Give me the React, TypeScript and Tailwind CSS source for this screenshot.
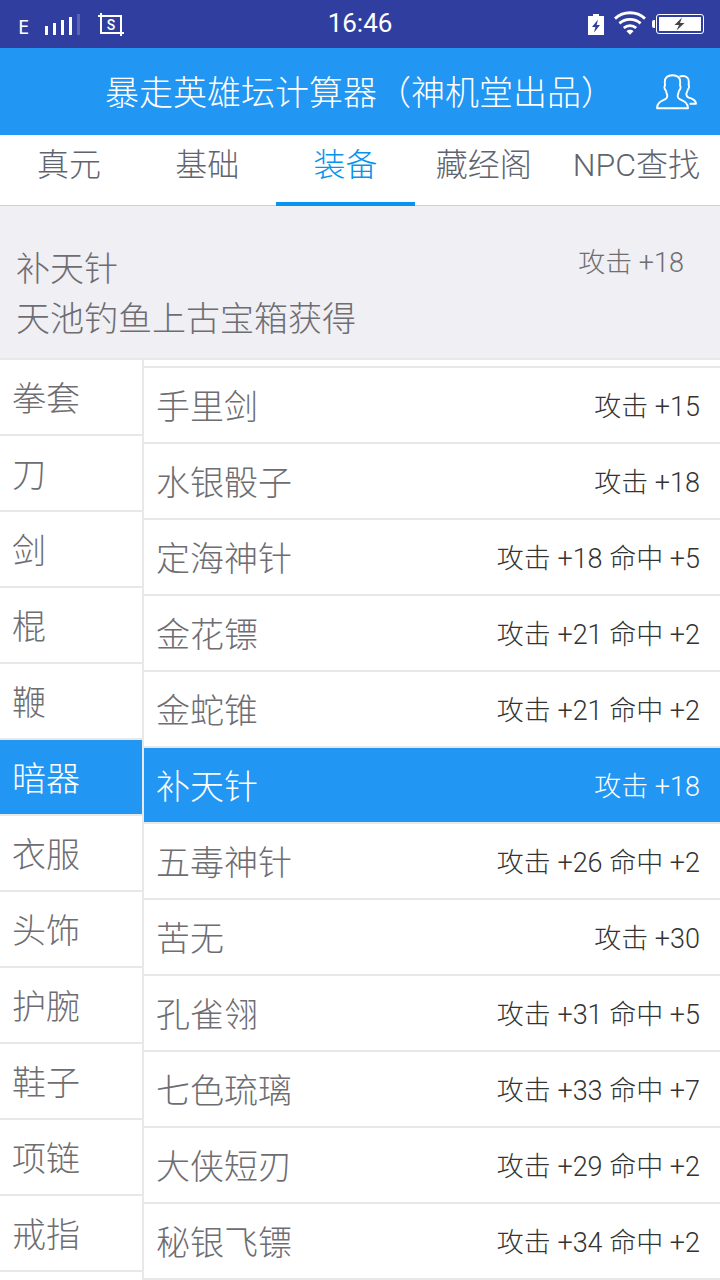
import { useState } from "react";

const tabs = ["真元", "基础", "装备", "藏经阁", "NPC查找"];

const categories = [
  "拳套", "刀", "剑", "棍", "鞭", "暗器",
  "衣服", "头饰", "护腕", "鞋子", "项链", "戒指",
];

const items = [
  { name: "手里剑", stats: "攻击 +15" },
  { name: "水银骰子", stats: "攻击 +18" },
  { name: "定海神针", stats: "攻击 +18 命中 +5" },
  { name: "金花镖", stats: "攻击 +21 命中 +2" },
  { name: "金蛇锥", stats: "攻击 +21 命中 +2" },
  { name: "补天针", stats: "攻击 +18" },
  { name: "五毒神针", stats: "攻击 +26 命中 +2" },
  { name: "苦无", stats: "攻击 +30" },
  { name: "孔雀翎", stats: "攻击 +31 命中 +5" },
  { name: "七色琉璃", stats: "攻击 +33 命中 +7" },
  { name: "大侠短刃", stats: "攻击 +29 命中 +2" },
  { name: "秘银飞镖", stats: "攻击 +34 命中 +2" },
];

function SignalIcon() {
  return (
    <svg width="36" height="24" viewBox="0 0 36 24" fill="#fff" aria-hidden="true">
      <rect x="1" y="14" width="3" height="9" />
      <rect x="9" y="11" width="3" height="12" />
      <rect x="17" y="8" width="3" height="15" />
      <rect x="25" y="5" width="3" height="18" />
      <rect x="33" y="2" width="3" height="21" opacity="0.2" />
    </svg>
  );
}

function CropFrame() {
  return (
    <svg className="absolute inset-0" width="26" height="24" viewBox="0 0 26 24" fill="#fff" aria-hidden="true">
      <path d="M2 1h2v21H2zM0 3h24v2H0zM22 3h2v21h-2zM2 20h24v2H2z" />
    </svg>
  );
}

function SmallBatteryIcon() {
  return (
    <svg width="16" height="21" viewBox="0 0 16 21" aria-hidden="true">
      <path d="M0 2h5V0h6v2h5v19H0z" fill="#fff" />
      <path d="M10 5.500 4 13h3.400L6 18.500 12 11H8.600z" fill="#303f9f" />
    </svg>
  );
}

function WifiIcon() {
  return (
    <svg width="32" height="24" viewBox="0 0 32 24" fill="none" stroke="#fff" strokeWidth="2.8" aria-hidden="true">
      <path d="M1 7.600C9.500-.2 22.500-.2 31 7.600" />
      <path d="M5.400 12.400c6-5.500 15.200-5.500 21.200 0" />
      <path d="M9.800 17c3.600-3.200 8.800-3.200 12.400 0" />
      <path d="M12.500 20.200c2-1.900 5-1.900 7 0L16 23.800z" fill="#fff" stroke="none" />
    </svg>
  );
}

function BatteryIcon() {
  return (
    <svg width="52" height="20" viewBox="0 0 52 20" aria-hidden="true">
      <path d="M3 6v8H2a2 2 0 0 1-2-2V8a2 2 0 0 1 2-2z" fill="#fff" />
      <rect x="4.500" y="0.500" width="47" height="19" rx="2.500" fill="none" stroke="#fff" />
      <rect x="7" y="3" width="42" height="14" fill="#fff" />
      <path d="M30 3.500 22.500 11h4.500l-2.500 5.500L32.500 9H28z" fill="#444" />
    </svg>
  );
}

function FriendsIcon() {
  return (
    <svg width="42" height="36" viewBox="0 0 42 36" fill="none" stroke="#fff" strokeWidth="1.900" strokeLinejoin="round" aria-hidden="true">
      <path d="M16.500 1.200c-5 0-7.900 2.600-7.700 7 0 1.600.2 2.600.2 3.300-1 .7-.7 4 1 5.200.3 2.600 1.300 3.400 1.300 5.200 0 1.600-.6 2.600-1.900 3.200C5.500 27 1 28.500 1 34.200h31c0-5.700-4.500-7.200-8.400-9.100-1.300-.6-1.900-1.600-1.900-3.200 0-1.800 1-2.600 1.300-5.200 1.700-1.200 2-4.500 1-5.200 0-.7.200-1.700.2-3.300.2-4.400-2.700-7-7.700-7z" />
      <path d="M23.500 2.700c1-.5 2-.7 3.300-.7 3.900 0 6.200 2.200 6 6 0 1.500-.1 2.300-.2 3 .9.800.6 3.500-.8 4.600-.3 2.200-1.500 3-1.500 4.700 0 1.600.7 2.400 2 3 4 1.800 7.700 2.300 7.700 6.500h-6.500" />
    </svg>
  );
}

export default function App() {
  const [tab, setTab] = useState("装备");
  const [category, setCategory] = useState("暗器");
  const [selected, setSelected] = useState("补天针");
  const current = items.find((item) => item.name === selected) ?? items[0];

  return (
    <div className="flex h-screen flex-col overflow-hidden bg-white font-['Roboto','Noto_Sans_CJK_SC',sans-serif] font-light text-[#6d6d72]">
      <div className="grid h-12 shrink-0 grid-cols-3 items-center bg-[#303f9f] text-white">
        <div className="flex items-center pl-[18px]">
          <span className="w-[26px] pt-1.5 font-['Noto_Sans'] text-xl font-normal leading-6">E</span>
          <SignalIcon />
          <span className="relative ml-[18px] flex h-6 w-[26px] items-center justify-center pt-px font-['Roboto'] text-sm font-medium">
            <CropFrame />
            S
          </span>
        </div>
        <time className="pb-0.5 text-center font-['Roboto'] text-[26px] font-normal leading-8">16:46</time>
        <div className="flex items-center justify-end pr-4">
          <SmallBatteryIcon />
          <span className="ml-2.5 mr-1.5 pb-0.5"><WifiIcon /></span>
          <BatteryIcon />
        </div>
      </div>

      <header className="grid h-[87px] shrink-0 grid-cols-[80px_1fr_80px] items-center bg-[#2196f3] text-white">
        <h1 className="col-start-2 whitespace-nowrap pt-0.5 text-center text-[34px] leading-[50px]">
          暴走英雄坛计算器（神机堂出品）
        </h1>
        <button type="button" aria-label="好友" className="flex justify-end pr-[22px]">
          <FriendsIcon />
        </button>
      </header>

      <nav className="flex h-[71px] shrink-0 border-b border-[#d0d0d0] text-[32px] leading-[60px]">
        {tabs.map((label) => (
          <button
            key={label}
            type="button"
            onClick={() => setTab(label)}
            className={
              label === tab
                ? "-mb-px flex flex-1 justify-center border-b-4 border-[#0894ec] px-5 text-[#0894ec]"
                : "flex flex-1 justify-center whitespace-nowrap px-5 text-[#5f646e]"
            }
          >
            {label}
          </button>
        ))}
      </nav>

      <section className="flex shrink-0 items-start justify-between border-b-2 border-[#e8e8e8] bg-[#efeff4] pb-3.5 pl-4 pr-9 pt-9">
        <div className="pt-0.5 text-[34px] leading-[50px]">
          <h2>{current.name}</h2>
          <p>天池钓鱼上古宝箱获得</p>
        </div>
        <p className="text-[27px] leading-[42px]">{current.stats}</p>
      </section>

      <main className="flex min-h-0 flex-1">
        <ul className="w-36 shrink-0 overflow-hidden border-r-2 border-[#e8e8e8]">
          {categories.map((label) => (
            <li key={label} className="h-[76px] border-b-2 border-[#e8e8e8]">
              <button
                type="button"
                onClick={() => setCategory(label)}
                className={
                  label === category
                    ? "flex size-full items-center bg-[#2196f3] pl-3 pt-1 text-[34px] text-white"
                    : "flex size-full items-center pl-3 pt-1 text-[34px]"
                }
              >
                {label}
              </button>
            </li>
          ))}
        </ul>
        <ul className="min-w-0 flex-1 overflow-hidden">
          <li className="h-2 border-b-2 border-[#e8e8e8]" aria-hidden="true" />
          {items.map((item) => (
            <li key={item.name} className="h-[76px] border-b-2 border-[#e8e8e8]">
              <button
                type="button"
                onClick={() => setSelected(item.name)}
                className={
                  item.name === selected
                    ? "flex size-full items-center justify-between bg-[#2196f3] pl-3 pr-5 pt-1 text-white"
                    : "flex size-full items-center justify-between pl-3 pr-5 pt-1"
                }
              >
                <span className="text-[34px]">{item.name}</span>
                <span className={item.name === selected ? "text-[27px]" : "text-[27px] text-[#333]"}>
                  {item.stats}
                </span>
              </button>
            </li>
          ))}
        </ul>
      </main>
    </div>
  );
}
